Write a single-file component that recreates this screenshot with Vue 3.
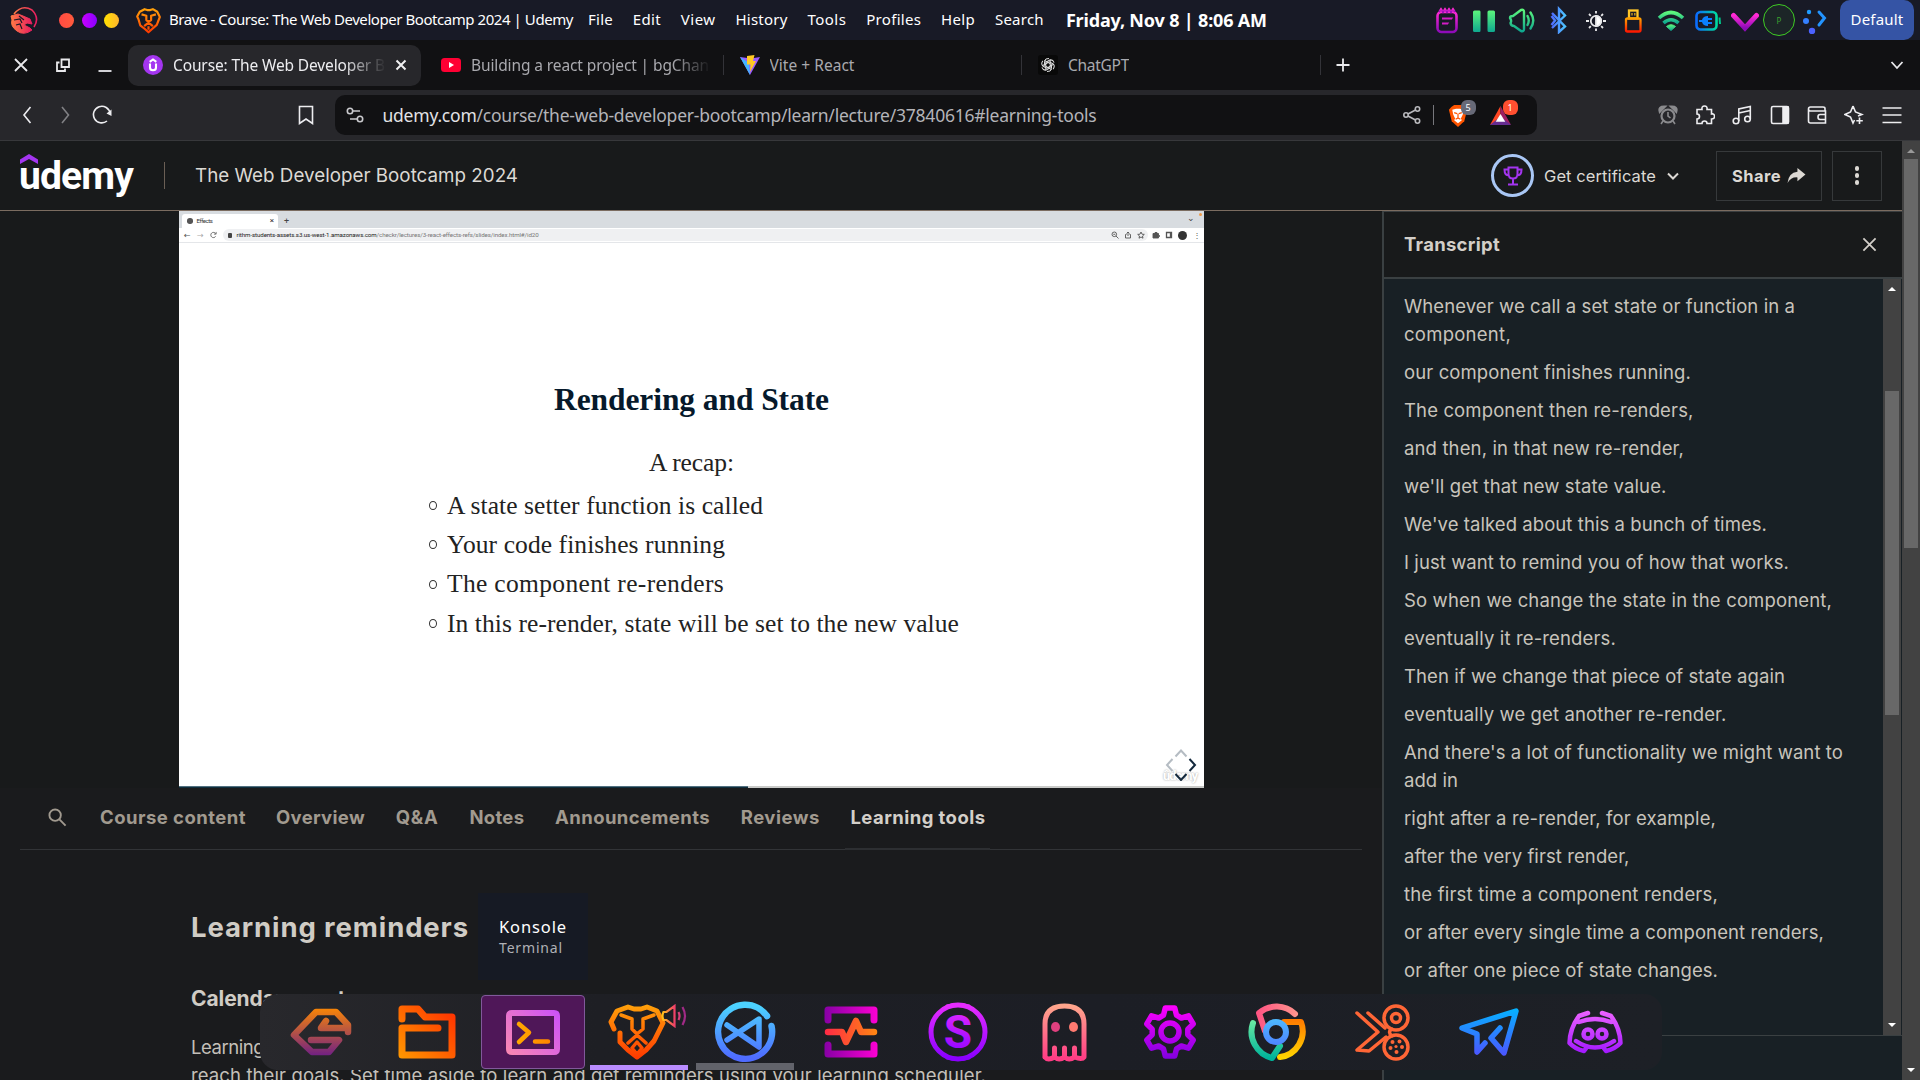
<script setup>
// Tracks a label's letters so that it takes up a given width.
const vFit = {
  mounted(el, { value }) {
    if (!value) return
    const w = el.getBoundingClientRect().width
    el.style.letterSpacing = (value - w) / el.textContent.length + 'px'
  },
}

const menus = [['File', 25], ['Edit', 28], ['View', 35], ['History', 52], ['Tools', 39], ['Profiles', 55], ['Help', 34], ['Search', 49]]

const nav = [['Course content', 146], ['Overview', 89], ['Q&A', 43], ['Notes', 55], ['Announcements', 155], ['Reviews', 79], ['Learning tools', 135]]

const slideList = [
  ['A state setter function is called', 316],
  ['Your code finishes running', 278],
  ['The component re-renders', 277],
  ['In this re-render, state will be set to the new value', 512],
]

const transcript = [
  [['Whenever we call a set state or function in a', 391], ['component,', 107]],
  [['our component finishes running.', 287]],
  [['The component then re-renders,', 289.5]],
  [['and then, in that new re-render,', 280]],
  [["we'll get that new state value.", 262.5]],
  [["We've talked about this a bunch of times.", 363]],
  [['I just want to remind you of how that works.', 385]],
  [['So when we change the state in the component,', 428]],
  [['eventually it re-renders.', 212]],
  [['Then if we change that piece of state again', 381]],
  [['eventually we get another re-render.', 322.5]],
  [["And there's a lot of functionality we might want to", 439], ['add in', 54]],
  [['right after a re-render, for example,', 312]],
  [['after the very first render,', 225.5]],
  [['the first time a component renders,', 314]],
  [['or after every single time a component renders,', 420]],
  [['or after one piece of state changes.', 314]],
]

const gradients = [
  ['g-gecko', '#ff8a00', '#6a1b8a', 'v'],
  ['g-folder', '#ff9f00', '#ff2d00', 'u'],
  ['g-term', '#ff8fa8', '#c84dff', 'u'],
  ['g-prompt', '#ffb800', '#ff7a00', 'h'],
  ['g-lion', '#ff9f0a', '#ff3a00', 'v'],
  ['g-code', '#4cd3ff', '#4f6bff', 'v'],
  ['g-mag', '#7b00a0', '#ff00d4', 'h'],
  ['g-pulse', '#ff1f4b', '#ff8a10', 'h'],
  ['g-s', '#e62cff', '#8a00ff', 'v'],
  ['g-ghost', '#ffa58c', '#ff3d85', 'v'],
  ['g-gear', '#ff00ff', '#8200e0', 'v'],
  ['g-pink', '#ff3f7f', '#ff9f8f', 'h'],
  ['g-orange', '#ff5a00', '#ffd500', 'v'],
  ['g-green', '#93ffa5', '#00b39a', 'v'],
  ['g-tele', '#00b8ff', '#5050ff', 'v'],
  ['g-disc', '#f56bff', '#9a10ff', 'v'],
].map(([id, a, b, dir]) => ({
  id, a, b,
  x1: 0, y1: dir === 'u' ? 60 : dir === 'v' ? 6 : 0,
  x2: dir === 'v' ? 0 : 60, y2: dir === 'v' ? 58 : dir === 'u' ? 6 : 0,
}))

function gearPath() {
  const pts = []
  for (let i = 0; i < 6; i++) {
    for (const [off, r] of [[-21, 18], [-11, 24.5], [11, 24.5], [21, 18]]) {
      const t = ((i * 60 - 90 + off) * Math.PI) / 180
      pts.push((32 + r * Math.cos(t)).toFixed(1) + ' ' + (32 + r * Math.sin(t)).toFixed(1))
    }
  }
  return 'M' + pts.join('L') + 'Z'
}
const ring = (x, y, r) => `M${x - r} ${y}a${r} ${r} 0 1 0 ${2 * r} 0a${r} ${r} 0 1 0 ${-2 * r} 0`

const dock = [
  { name: 'gecko', parts: [['M60 32V25L48 12H28L6 35L24 52H41L51 40H23M57 28H33L38 21', 'g-gecko', 6.5]] },
  { name: 'files', parts: [['M8 19V9H24L31 17H58V55H8V28H44', 'g-folder', 7]] },
  { name: 'konsole', parts: [['M11 13H53Q56 13 56 16V49Q56 52 53 52H11Q8 52 8 49V16Q8 13 11 13Z', 'g-term', 6], ['M18 24L28 32.500L18 42M34 41.500H47', 'g-prompt', 4.500]] },
  { name: 'brave', parts: [['M13 33V42L21 50L30 57L39 50L47 41L56 23L50 11L40 7L34 9H27L21 7L10 11L4 22L7 29', 'g-lion', 5], ['M14 15L25 19V29L30 34L36 29V19L47 15M21 43L30 35L39 43M30 42L35 48L30 54L25 48Z', 'g-lion', 3.5]] },
  { name: 'code', parts: [['M54 16A27 27 0 1 0 58.500 26', 'g-code', 6.500], ['M14 25L46 47V19L14 40', 'g-code', 5.500]] },
  { name: 'monitor', parts: [['M9 20V10H55V20M9 45V54H55V45', 'g-mag', 7], ['M9 32H23L27 42L37 21L42 32H55', 'g-pulse', 6.500]] },
  { name: 'ess', letter: 'S', parts: [[ring(32, 32, 27), 'g-s', 5], ['M21 6Q32 3 43 6M21 58Q32 61 43 58', 'g-s', 3]] },
  { name: 'ghost', eyes: true, parts: [['M13 57V24Q13 6 32.500 6Q52 6 52 24V57Q50 60 42.500 57V48M42.500 57Q37 61 32.500 57V48M32.500 57Q27 61 22.500 57V48M22.500 57Q16 61 13 57', 'g-ghost', 5]] },
  { name: 'gear', parts: [[gearPath(), 'g-gear', 5.500], [ring(32, 32, 9), 'g-gear', 5.500]] },
  { name: 'chrome', parts: [['M51 14A27 27 0 0 0 15 13L21 31', 'g-pink', 6], ['M40 22H57A26 26 0 0 1 36 57', 'g-orange', 6], ['M9 23A27 27 0 0 0 28 58L36 46', 'g-green', 6], [ring(32, 32, 10), 'g-code', 6]] },
  { name: 'snip', dots: true, parts: [['M6 13L27 32L6 50L18 51L35 37M17 13L34 28M41 36Q36 32 41 29', '', 3.500], [ring(45, 18, 12), '', 3.500], [ring(45, 18, 4.5), '', 3.500], [ring(45, 47, 12), '', 3.500]] },
  { name: 'telegram', parts: [['M28 43L20 52V34L5 28L59 11L47 53L34 38L43 28', 'g-tele', 5.500]] },
  { name: 'discord', parts: [['M25 13L16 16Q7 28 6.500 43Q12 49 21 51L24 47M39 13L48 16Q57 28 57.500 43Q52 49 43 51L40 47M16 22Q32 16 48 22M13 41Q32 54 51 41', 'g-disc', 4.500], [ring(25, 34, 4.500), 'g-disc', 4.500], [ring(39, 34, 4.500), 'g-disc', 4.500]] },
]
</script>

<template>
  <div class="screen">
    <svg class="defs" width="0" height="0">
      <defs>
        <linearGradient v-for="g in gradients" :id="g.id" :key="g.id" gradientUnits="userSpaceOnUse" :x1="g.x1" :y1="g.y1" :x2="g.x2" :y2="g.y2">
          <stop offset="0" :stop-color="g.a" /><stop offset="1" :stop-color="g.b" />
        </linearGradient>
        <linearGradient id="t-mag" x1="0" y1="0" x2="0" y2="1"><stop offset="0" stop-color="#ff2ad4" /><stop offset="1" stop-color="#8d0bb8" /></linearGradient>
        <linearGradient id="t-green" x1="0" y1="0" x2="0" y2="1"><stop offset="0" stop-color="#5cf57c" /><stop offset="1" stop-color="#0fa88f" /></linearGradient>
        <linearGradient id="t-blue" x1="0" y1="0" x2="1" y2="0"><stop offset="0" stop-color="#4f6bff" /><stop offset="1" stop-color="#4cc3ff" /></linearGradient>
        <linearGradient id="t-batt" x1="0" y1="0" x2="1" y2="0"><stop offset="0" stop-color="#0a6cff" /><stop offset="1" stop-color="#00d9a0" /></linearGradient>
        <linearGradient id="t-red" x1="0" y1="0" x2="0" y2="1"><stop offset="0" stop-color="#ffa000" /><stop offset="1" stop-color="#ff1a00" /></linearGradient>
        <linearGradient id="t-drag" x1="0" y1="0" x2="1" y2="0"><stop offset="0" stop-color="#ff7a45" /><stop offset="1" stop-color="#e81c60" /></linearGradient>
      </defs>
    </svg>

    <header class="panel">
      <svg class="dragon" viewBox="0 0 28 28" fill="none" stroke="url(#t-drag)">
        <path d="M4 8Q12 -2 22 4Q30 12 24 21" stroke-width="1.600" />
        <path d="M1 10L8 8L13 10L20 13L22 18L17 17L14 19L20 22L22 24Q14 30 7 25Q0 20 2 14Z" fill="url(#t-drag)" stroke-width="1" />
        <path d="M4 14L10 13L12 17M6 19L10 18L12 23M9 10L14 14" stroke="#181a26" stroke-width="1.200" />
      </svg>
      <i class="dot red"></i><i class="dot violet"></i><i class="dot gold"></i>
      <svg class="lion" viewBox="0 0 60 62" fill="none" stroke="url(#g-lion)" stroke-width="5" stroke-linejoin="round"><path d="M7 28L11 42L21 50L30 58L39 50L49 41L56 23L50 11L40 5L34 7H27L21 5L10 11L4 22Z" /><path d="M14 17L25 20V30L30 34L36 30V20L47 17M20 44L30 36L40 44M30 44V52" stroke-width="5" /></svg>
      <span v-fit="404" class="title">Brave - Course: The Web Developer Bootcamp 2024 | Udemy</span>
      <nav class="menus"><span v-for="m in menus" :key="m[0]" v-fit="m[1]">{{ m[0] }}</span></nav>
      <b v-fit="201" class="clock">Friday, Nov 8 | 8:06 AM</b>
      <div class="tray">
        <svg viewBox="0 0 28 28" fill="none" stroke="url(#t-mag)" stroke-width="2.600"><rect x="4.500" y="6" width="19" height="20" rx="4" /><path d="M6 6L8 3L10 6L12 3L14 6L16 3L18 6L20 3L22 6" stroke-width="2" /><path d="M9 12.500H19V12.600M9 17.500H15V17.600" stroke="#d41cc6" stroke-width="2.200" /></svg>
        <svg viewBox="0 0 28 28"><path fill="url(#t-green)" d="M3 6q0-1.500 1.500-1.500H9.500Q10.500 4.500 10.500 6V24.500Q10.500 26 9.500 26H4.500Q3 26 3 24.500ZM17.500 6q0-1.500 1.500-1.500h4.500Q25 4.500 25 6V24.500Q25 26 23.500 26H19Q17.500 26 17.500 24.500Z" /></svg>
        <svg viewBox="0 0 28 28" fill="none" stroke="url(#t-green)" stroke-width="2.400" stroke-linejoin="round" stroke-linecap="round"><path d="M2 12Q2 10 5 10L13 4Q16 3 16 6V23Q16 26 13 25L6 20Q3 20 2.500 17Q4 15 2 12ZM19.500 10Q22 14.500 19.500 19M22.500 6.500Q28 14.500 22.500 22.500" /></svg>
        <svg viewBox="0 0 28 28" fill="none" stroke="url(#t-blue)" stroke-width="2.400"><path d="M7 7L20 20.500L14 26V3L20 9.500L7 22M6.500 10L10 14.500L6.500 19" /></svg>
        <svg viewBox="0 0 28 28" fill="none" stroke="#e8e8ea" stroke-width="1.800"><circle cx="14" cy="15" r="5.200" /><path d="M14 9.800a5.200 5.200 0 0 1 0 10.400z" fill="#fff" /><path d="M14 5V7.500M14 22.500V25M4 15H7M21 15H24M7 8L8.800 9.800M19.200 20.200L21 22M21 8L19.200 9.800M7 22L8.800 20.200" /></svg>
        <svg viewBox="0 0 28 28" fill="none" stroke-width="2.300"><rect x="10" y="4.500" width="8.500" height="8" stroke="#ffc629" fill="#181a26" /><path d="M13 7V9.500M15.800 7V9.500" stroke="#c39520" stroke-width="1.500" /><rect x="7" y="12.500" width="14.500" height="13" rx="1.500" stroke="url(#t-red)" /></svg>
        <svg viewBox="0 0 28 28" fill="none" stroke="url(#t-green)" stroke-width="3.600"><path d="M2 12Q14 1 26 12M6.500 17Q14 10.500 21.500 17" /><path d="M9.500 20.500Q14 17 18.500 20.500L14 24.500Z" fill="url(#t-green)" stroke-width="1" /></svg>
        <svg viewBox="0 0 28 28" fill="none" stroke="url(#t-batt)" stroke-width="2.600"><rect x="2.500" y="6" width="20" height="17.500" rx="4" /><path d="M25.500 11.500L26 18" stroke="#00c78c" stroke-width="2" /><path fill="#0a80ff" stroke="none" d="M5 14H8Q9 10 14 10V12H18V14H14V16H18V18H14V20Q9 20 8 16H5Z" /></svg>
        <svg viewBox="0 0 28 28" fill="none" stroke="url(#t-mag)" stroke-width="5" stroke-linecap="round"><path d="M2.500 10L14 22.500L25.500 10" transform="translate(0 -.5)" /></svg>
        <span class="orb"><em>P</em></span>
        <svg viewBox="0 0 28 28" fill="#1f9bff"><circle cx="8" cy="6" r="2.200" /><circle cx="5" cy="15" r="3" fill="#3580ff" /><circle cx="11" cy="25" r="3.200" fill="#4c62ff" /><path d="M18 6L23.500 12L18 19" fill="none" stroke="#2394ff" stroke-width="3" stroke-linecap="round" /></svg>
      </div>
      <div class="desk"><span v-fit="53">Default</span></div>
    </header>

    <div class="strip">
      <div class="wc">
        <svg viewBox="0 0 14 14"><path d="M1 1L13 13M13 1L1 13" /></svg>
        <svg viewBox="0 0 14 14" class="restore"><path d="M5.500 1.500H13V9H5.500ZM3.500 4.500H1V13H9V10.500" /></svg>
        <svg viewBox="0 0 14 14"><path d="M.500 13H13.500" /></svg>
      </div>
      <div class="tab on">
        <svg viewBox="0 0 20 20"><circle cx="10" cy="10" r="10" fill="#a435f0" /><path d="M6.700 6.800L10 4.500L13.300 6.800M7 8.500V12.500Q7 15.300 10 15.300T13 12.500V8.500" fill="none" stroke="#fff" stroke-width="2.100" /></svg>
        <span class="label long"><span v-fit="212">Course: The Web Developer B</span></span>
        <svg class="x" viewBox="0 0 14 14"><path d="M2.500 2.500L11.500 11.500M11.500 2.500L2.500 11.500" /></svg>
      </div>
      <div class="tab line"><svg viewBox="0 0 20 20"><rect y="3" width="20" height="14" rx="3.500" fill="#ff0033" /><path d="M8 7L13 10L8 13Z" fill="#fff" /></svg><span class="label wide"><span v-fit="238">Building a react project | bgChan</span></span></div>
      <div class="tab line"><svg viewBox="0 0 20 20"><path d="M0 2L10 20L20 2L11 3.500Z" fill="#9a5cff" /><path d="M0 2L10 20L9 8Z" fill="#41b6ff" /><path d="M7 1L14.500 0L13 6H16L10 17L10.500 9.500H7Z" fill="#ffc922" /></svg><span class="label"><span v-fit="85">Vite + React</span></span></div>
      <div class="tab line"><svg viewBox="0 0 20 20" fill="none" stroke="#dedede" stroke-width="1"><rect width="20" height="20" rx="3" fill="#090909" stroke="none" /><g v-for="a in 6" :key="a" :transform="`rotate(${a * 60} 10 10)`"><path d="M10 7.500L13.500 9.500V13.500Q13 17 9 16.500M12.200 8.700V4.500" /></g></svg><span class="label"><span v-fit="61">ChatGPT</span></span></div>
      <svg class="plus" viewBox="0 0 14 14"><path d="M7 .500V13.500M.500 7H13.500" /></svg>
      <svg class="more" viewBox="0 0 14 14"><path d="M1.500 4L7 10L12.500 4" /></svg>
    </div>

    <div class="toolbar">
      <svg class="nv" viewBox="0 0 20 20"><path d="M13.500 2L7 10L13.500 18" /></svg>
      <svg class="nv dim" viewBox="0 0 20 20"><path d="M7 2L13.500 10L7 18" /></svg>
      <svg class="nv" viewBox="0 0 20 20"><path d="M15 16A8.300 8.300 0 1 1 18 8.500" /><path d="M14.500 8.500L19.500 4.500V11Z" fill="#ededf0" stroke="none" /></svg>
      <svg class="bm" viewBox="0 0 20 20"><path d="M3.500 1.500H16.500V18.500L10 14L3.500 18.500Z" /></svg>
      <div class="url">
        <svg class="tune" viewBox="0 0 18 18"><circle cx="4" cy="5" r="2.700" /><path d="M7 5H14M4 13H11" /><circle cx="14" cy="13" r="2.700" /></svg>
        <span v-fit="714" class="addr"><b>udemy.com</b>/course/the-web-developer-bootcamp/learn/lecture/37840616#learning-tools</span>
        <svg class="shr" viewBox="0 0 18 18"><circle cx="3" cy="9" r="2.200" /><circle cx="14.500" cy="3" r="2.200" /><circle cx="14.500" cy="15" r="2.200" /><path d="M5 8L12.500 4M5 10L12.500 14" /></svg>
        <i class="bar"></i>
        <div class="ext">
          <svg viewBox="0 0 20 24"><path d="M3 3L6 1H14L17 3L19.500 6L16.500 18L10 24L3.500 18L.500 6Z" fill="#ff5500" /><path d="M4 6L8 5H12L16 6L15 11L13 15L14 17L10 20L6 17L7 15L5 11Z" fill="#fff" /><path d="M6 9L9 10M14 9L11 10M10 10V14M7.500 16L10 14.500L12.500 16" stroke="#ff5500" stroke-width="1.300" fill="none" /></svg>
          <em>5</em>
        </div>
        <div class="ext bat">
          <svg viewBox="0 0 22 24"><path d="M11 2L0 22L11 16Z" fill="#ff4724" /><path d="M11 2L22 22L11 16Z" fill="#9e1f63" /><path d="M0 22H22L11 13Z" fill="#662d91" /><path d="M11 10.500L6 18.500H16Z" fill="#fff" /></svg>
          <em>1</em>
        </div>
      </div>
      <div class="exts">
        <svg viewBox="0 0 20 20" class="alarm"><circle cx="10" cy="11" r="6.500" stroke-width="2.200" /><path d="M10 7V11L12.500 13M5 16L3 19M15 16L17 19" /><path d="M2 6Q1 2 6 2ZM18 6Q19 2 14 2Z" stroke-width="3" /></svg>
        <svg viewBox="0 0 20 20"><path d="M2 4.500H7Q6.500 1 9.500 1T12 4.500H16.500V9Q19.500 8.500 19.500 11.300T16.500 14V18.500H12Q12 16 9.500 16T7 18.500H2V14Q4.500 14 4.500 11.500T2 9Z" /></svg>
        <svg viewBox="0 0 20 20"><circle cx="4" cy="16" r="2.800" /><circle cx="15.500" cy="14" r="2.800" /><path d="M6.800 16V4L18.300 1.500V14M6.800 8L18.300 5.500" /></svg>
        <svg viewBox="0 0 20 20"><rect x="1.500" y="1.500" width="17" height="17" rx="1.500" /><path d="M13 2H18V18H13Z" fill="#ededf0" /></svg>
        <svg viewBox="0 0 20 20"><path d="M18 6V3.500Q18 2 16 2H3.500Q1.500 2 1.500 4T3.500 6H18.500V18H3.500Q1.500 18 1.500 16V4M18.500 9.500H13Q11 9.500 11 12T13 14.500H18.500" /></svg>
        <svg viewBox="0 0 20 20"><path d="M9 1L11.500 7L18 9.500L14 11M9 1L6.500 7L1 9.500L6.500 12L9 18L10.500 15M15.500 12.500V19M12.300 15.800H18.800" /></svg>
        <svg viewBox="0 0 20 20"><path d="M.500 3H19.500M.500 10H19.500M.500 17.500H19.500" /></svg>
      </div>
    </div>

    <div class="page">
      <div class="body">
        <div class="head">
          <div class="logo"><svg viewBox="0 0 18 10"><path d="M0 5.500L9 0L18 5.500V10L9 5L0 10Z" fill="#a435f0" /></svg><span v-fit="114">udemy</span></div>
          <i class="div"></i>
          <span v-fit="323" class="course">The Web Developer Bootcamp 2024</span>
          <div class="cup"><svg viewBox="0 0 20 20"><path d="M5.500 1.500H14.500V8Q14.500 12.500 10 12.500T5.500 8ZM5.500 3.500H1.500Q1.500 9.500 6 9.500M14.500 3.500H18.500Q18.500 9.500 14 9.500M10 12.500V18.500M5 18.500H15" /></svg></div>
          <span v-fit="112" class="cert">Get certificate</span>
          <svg class="chev" viewBox="0 0 14 14"><path d="M2 4.500L7 9.500L12 4.500" /></svg>
          <div class="btn share"><b v-fit="49">Share</b><svg viewBox="0 0 20 18"><path d="M11 1L19.500 8L11 15V11Q4 10.500 .500 17Q1.500 6 11 5Z" fill="#dcd9d4" /></svg></div>
          <div class="btn dots"><i></i><i></i><i></i></div>
        </div>
        <div class="main">
          <div class="left">
            <div class="stage">
              <div class="video">
                <div class="mini-tabs">
                  <div class="mini-tab"><i class="globe"></i><span v-fit="16">Effects</span><em>×</em></div><em class="mp">+</em>
                  <em class="mc">⌄</em><i class="od"></i>
                </div>
                <div class="mini-bar">
                  <em class="ar">←</em><em class="ar lt">→</em><svg class="rl" viewBox="0 0 8 8"><path d="M6.500 5.500A3 3 0 1 1 6.500 2.500M7 .500V3H4.500" /></svg>
                  <div class="mini-url"><i class="lock"></i><span v-fit="302"><b>rithm-students-assets.s3.us-west-1.amazonaws.com</b>/checkr/lectures/3-react-effects-refs/slides/index.html#/id20</span>
                    <div class="mi"><svg viewBox="0 0 8 8"><circle cx="3.300" cy="3.300" r="2.300" /><path d="M5 5L7.500 7.500M2.300 3.300H4.300" /></svg><svg viewBox="0 0 8 8"><path d="M2.500 3.500H1.500V7H6.500V3.500H5.500M4 5V1L2.500 2.500M4 1L5.500 2.500" /></svg><svg viewBox="0 0 8 8"><path d="M4 1L5 3.200L7.300 3.400L5.500 5L6 7.200L4 6L2 7.200L2.500 5L.700 3.400L3 3.200Z" /></svg></div>
                  </div>
                  <svg viewBox="0 0 8 8"><path d="M1 2.500H3V1.500H5V2.500H6.500V4.500H7.500V5.500H6.500V7H1Z" fill="#555" /></svg>
                  <svg viewBox="0 0 8 8"><path d="M1.500 1.500H6.500V6.500H1.500ZM5.500 1.500V6.500" stroke-width="1.300" /></svg>
                  <i class="ava"></i><em class="kb">⋮</em>
                </div>
                <div class="slide">
                  <h1><span v-fit="275">Rendering and State</span></h1>
                  <p><span v-fit="85">A recap:</span></p>
                  <ul><li v-for="s in slideList" :key="s[0]"><i></i><span v-fit="s[1]">{{ s[0] }}</span></li></ul>
                </div>
                <span v-fit="34" class="wm">ûdemy</span>
                <svg class="reveal" viewBox="0 0 32 32" fill="none" stroke-width="2"><path d="M10.500 7.500L16 1.500L21.500 7.500M7.500 10L2 16L7.500 22" stroke="#b5bcc3" /><path d="M24.500 10L30 16L24.500 22M10.500 25L16 31L21.500 25" stroke="#14293d" /></svg>
                <div class="prog"><i></i></div>
              </div>
            </div>
            <div class="nav">
              <svg viewBox="0 0 20 20"><circle cx="7.500" cy="7.500" r="6" /><path d="M12 12L18.500 18.500" /></svg>
              <b v-for="(n, i) in nav" :key="n[0]" :class="{ cur: i === 6 }"><span v-fit="n[1]">{{ n[0] }}</span></b>
            </div>
            <div class="tools">
              <h2><span v-fit="278">Learning reminders</span></h2>
              <h3><span v-fit="166">Calendar events</span></h3>
              <p><span v-fit="908">Learning a little each day adds up. Research shows that students who make learning a habit are more likely to</span></p>
              <p><span v-fit="795">reach their goals. Set time aside to learn and get reminders using your learning scheduler.</span></p>
            </div>
          </div>
          <aside>
            <div class="ah"><b v-fit="96">Transcript</b><svg viewBox="0 0 16 16"><path d="M1.500 1.500L14.500 14.500M14.500 1.500L1.500 14.500" /></svg></div>
            <div class="al">
              <div class="cues"><p v-for="(c, i) in transcript" :key="i"><template v-for="l in c" :key="l[0]"><span v-fit="l[1]">{{ l[0] }}</span><br></template></p></div>
              <div class="sb"><i class="up"></i><div class="thumb"></div><i class="down"></i></div>
            </div>
            <div class="af"></div>
          </aside>
        </div>
      </div>
      <div class="psb"><i class="up"></i><div class="thumb"></div><i class="down"></i></div>
    </div>

    <div class="tip"><span v-fit="68">Konsole</span><small v-fit="64">Terminal</small></div>

    <div class="dock">
      <div v-for="d in dock" :key="d.name" class="cell" :class="d.name">
        <svg viewBox="0 0 64 64" fill="none" stroke-linejoin="round" stroke-linecap="round">
          <path v-for="(p, i) in d.parts" :key="i" :d="p[0]" :stroke="p[1] ? `url(#${p[1]})` : '#ff6636'" :stroke-width="p[2]" />
          <text v-if="d.letter" x="32" y="48" text-anchor="middle" class="ltr" fill="url(#g-s)">{{ d.letter }}</text>
          <g v-if="d.eyes"><ellipse cx="23.500" cy="27" rx="4.500" ry="5" fill="#e0407f" /><ellipse cx="41.500" cy="27" rx="4.500" ry="5" fill="#ff7a70" /></g>
          <g v-if="d.dots" fill="#ff6636"><circle cx="45" cy="46.500" r="1.600" /><circle cx="41.500" cy="42" r="2" /><circle cx="48.500" cy="41.500" r="2" /><circle cx="51" cy="47" r="2" /><circle cx="39.500" cy="48" r="2" /><circle cx="45.500" cy="52" r="2" /></g>
        </svg>
        <svg v-if="d.name === 'brave'" class="spk" viewBox="0 0 26 24" fill="none" stroke-width="2.200"><path d="M5 8L2 8Q0 12 2 16H5L13 22V2Z" stroke="url(#spk)" /><path d="M17 8Q19 12 17 16" stroke="#d8407a" /><path d="M21 3Q26 12 21 21" stroke="#a02a86" /><defs><linearGradient id="spk"><stop offset="0" stop-color="#ffc01a" /><stop offset="1" stop-color="#f0406a" /></linearGradient></defs></svg>
      </div>
    </div>
  </div>
</template>

<style>
body { background: #1a1b1d; overflow: hidden; }
</style>

<style scoped>
* { box-sizing: border-box; margin: 0; padding: 0; }
.screen { position: relative; width: 1920px; height: 1080px; overflow: hidden; display: flex; flex-direction: column; font-family: "Noto Sans", sans-serif; color: #fff; background: #1a1b1d; }
.defs { position: absolute; }
span, b, small { white-space: pre; }
svg { flex: none; display: block; }
em { font-style: normal; }

.panel { height: 40px; flex: none; background: #181a26; display: flex; align-items: center; }
.dragon { width: 28px; height: 28px; margin-left: 10px; margin-right: 21px; }
.dot { width: 15px; height: 15px; border-radius: 50%; margin-right: 7.500px; }
.red { background: linear-gradient(90deg, #ff4b43, #ff5a3c); }
.violet { background: linear-gradient(90deg, #c800ff, #8a00ff); }
.gold { background: linear-gradient(90deg, #ffe100, #ffb52e); margin-right: 16px; }
.lion { width: 27px; height: 27px; margin-right: 7px; }
.title { font-size: 15px; padding-bottom: 3px; }
.menus { display: flex; gap: 19.850px; margin-left: 15px; font-size: 15px; padding-bottom: 2px; }
.clock { font-size: 18px; margin-left: 22px; padding-bottom: 1px; }
.tray { display: flex; margin-left: 161.500px; align-items: center; }
.tray svg { width: 28px; height: 28px; margin: 0 4.650px; }
.orb { width: 32px; height: 32px; border: 1.500px solid #3ecb24; border-radius: 50%; background: #1c2527; margin: 0 1px 0 -1px; display: flex; align-items: center; justify-content: center; }
.orb em { font-size: 8px; color: #3aa030; }
.desk { width: 74px; height: 40px; border-radius: 10px; background: #3554a5; margin-left: auto; margin-right: 6px; display: flex; align-items: center; justify-content: center; font-size: 15px; padding-bottom: 2px; }

.strip { height: 50px; flex: none; background: #111113; display: flex; align-items: center; }
.wc { display: flex; width: 128px; padding-left: 14px; gap: 28px; height: 14px; }
.wc svg, .plus, .more { width: 14px; height: 14px; fill: none; stroke: #e9e9ec; stroke-width: 1.800; }
.tab { width: 298.500px; height: 41px; padding-left: 15px; display: flex; align-items: center; color: #a9a9ae; font-size: 15.500px; }
.tab > svg { width: 20px; height: 20px; margin-right: 10px; }
.tab.on { width: 293px; background: #27272b; border-radius: 10px; padding-left: 15px; color: #ededf0; margin-right: 5px; }
.tab.on .x { width: 14px; height: 14px; fill: none; stroke: #f0f0f2; stroke-width: 2; margin: 0 0 0 8px; }
.tab.line { background: linear-gradient(#333338, #333338) right 1px center / 1px 20px no-repeat; }
.label { overflow: hidden; }
.long { width: 213px; mask-image: linear-gradient(90deg, #000 80%, transparent); }
.wide { width: 240px; mask-image: linear-gradient(90deg, #000 84%, transparent); }
.plus { margin-left: 14px; }
.more { margin-left: auto; margin-right: 16px; }

.toolbar { height: 51px; flex: none; background: #27272b; border-bottom: 1px solid #37383b; display: flex; align-items: center; padding-left: 17px; }
.toolbar svg { fill: none; stroke: #ededf0; stroke-width: 1.600; }
.nv { width: 20px; height: 20px; margin-right: 17.500px; }
.nv.dim { opacity: .45; }
.bm { width: 20px; height: 20px; margin-left: 166px; margin-right: 19px; }
.url { width: 1202px; height: 40px; border-radius: 10px; background: #111113; display: flex; align-items: center; padding-left: 11px; }
.url .tune { width: 18px; height: 18px; margin-right: 19px; stroke: #c9c9cd; }
.addr { font-size: 17.500px; color: #b4b4b9; padding-bottom: 1px; }
.addr b { font-weight: 400; color: #e2e2e6; }
.url .shr { width: 18px; height: 18px; margin-left: 306px; stroke: #b9b9bd; }
.bar { width: 1px; height: 20px; background: #77777c; margin: 0 14px 0 12px; }
.ext { position: relative; width: 20px; margin-right: 21px; }
.ext svg { width: 20px; height: 23px; stroke: none; }
.bat svg { width: 23px; }
.ext em { position: absolute; left: 13px; top: -4px; width: 15px; height: 15px; border-radius: 6px; background: #676977; font-size: 9px; line-height: 15px; text-align: center; }
.bat em { background: #ff4f30; left: 14px; }
.exts { display: flex; gap: 17.400px; margin-left: 121px; }
.exts svg { width: 20px; height: 20px; }
.toolbar .alarm { stroke: #8a8a8d; }

.page { flex: 1; min-height: 0; display: flex; font-family: Inter, Roboto, sans-serif; }
.body { width: 1902px; display: flex; flex-direction: column; }
.head { height: 70px; flex: none; background: #181a1b; border-bottom: 1px solid #7b6c60; display: flex; align-items: center; padding-left: 20px; color: #dcd9d4; }
.logo { width: 114px; height: 50px; }
.logo svg { width: 18px; height: 10px; margin-top: 3px; margin-bottom: 1px; }
.logo span { display: block; width: max-content; font: 700 39px/40px Roboto, sans-serif; color: #fff; margin: -9px 0 0 -1px; }
.div { width: 1px; height: 27px; background: #6a5f55; margin: 0 30px; }
.course { font-size: 18.800px; }
.cup { width: 43px; height: 43px; border: 3px solid #a9c7f5; border-radius: 50%; margin-left: 973px; display: flex; align-items: center; justify-content: center; }
.cup svg { width: 20px; height: 20px; fill: none; stroke: #a435f0; stroke-width: 2; }
.cert { font-size: 16.500px; margin-left: 10px; }
.chev { width: 14px; height: 14px; fill: none; stroke: #dcd9d4; stroke-width: 2; margin-left: 10px; }
.btn { height: 50px; border: 1px solid #36393b; display: flex; align-items: center; }
.share { width: 106px; margin-left: 36px; padding-left: 15px; font-size: 16.500px; gap: 6px; }
.share svg { width: 19px; height: 17px; }
.dots { width: 50px; margin-left: 10px; flex-direction: column; justify-content: center; gap: 2.500px; }
.dots i { width: 4.500px; height: 4.500px; border-radius: 50%; background: #dcd9d4; }

.main { flex: 1; min-height: 0; display: flex; }
.left { width: 1382px; }
.stage { height: 577px; background: #181a1b; padding-left: 179px; }
.video { position: relative; width: 1025px; height: 577px; background: #fff; display: flex; flex-direction: column; font-family: Roboto, sans-serif; color: #444; }
.mini-tabs { height: 17px; flex: none; background: #d8dce0; display: flex; align-items: flex-end; padding-left: 3px; font-size: 6px; line-height: 14px; }
.mini-tab { width: 96px; height: 14px; border-radius: 3px 3px 0 0; background: #fff; display: flex; align-items: center; padding: 0 4px 0 5px; color: #333; }
.mini-tab em { margin-left: auto; font-size: 8px; }
.globe { width: 5.500px; height: 5.500px; border-radius: 50%; background: #555; margin-right: 4px; }
.mp { margin-left: 6px; font-size: 9px; }
.mc { margin-left: auto; font-size: 9px; line-height: 9px; align-self: flex-start; margin-top: 3px; }
.od { width: 3px; height: 3px; border-radius: 50%; background: #ef9b48; align-self: flex-start; margin: 2px 2px 0 4px; }
.mini-bar { height: 15px; flex: none; border-bottom: 1px solid #e4e6e9; display: flex; align-items: center; padding-left: 5px; font-size: 6.200px; color: #555; }
.mini-bar svg { width: 8px; height: 8px; fill: none; stroke: #555; stroke-width: .900; margin-right: 5px; }
.ar { width: 13px; font: 8px "DejaVu Sans", sans-serif; }
.lt { color: #aaa; }
.mini-bar .rl { width: 7px; margin-right: 6px; }
.mini-url { width: 925px; height: 12px; border-radius: 6px; background: #eff0f2; display: flex; align-items: center; padding: 0 0 0 5px; margin-right: 4px; }
.mini-url b { font-weight: 400; color: #222; }
.mini-url span { color: #777; }
.lock { width: 3.500px; height: 5px; background: #444; border-radius: 1px; margin-right: 5px; }
.mi { margin-left: auto; display: flex; }
.mi svg { margin-right: 5px; }
.mi svg:last-child { margin-right: 3px; }
.ava { width: 9px; height: 9px; border-radius: 50%; background: #333; margin-right: 6px; }
.kb { font-size: 8px; width: 6px; text-align: center; }
.slide { font-family: "Liberation Serif", serif; color: #222; padding-top: 138px; }
.slide h1 { font-size: 31.500px; line-height: 38px; text-align: center; color: #06192b; font-weight: 700; }
.slide p { font-size: 25.500px; line-height: 32px; text-align: center; margin-top: 28px; }
.slide ul { list-style: none; margin: 7px 0 0 250px; }
.slide li { height: 39.300px; display: flex; align-items: center; font-size: 25.500px; }
.slide li i { width: 8px; height: 9px; border: 1px solid #333; border-radius: 50%; margin-right: 10px; }
.slide li, .slide p, .slide h1 { white-space: nowrap; }
.reveal { position: absolute; right: 7px; bottom: 7px; width: 32px; height: 32px; }
.wm { position: absolute; left: 984px; bottom: 3px; font: 700 13px/18px Roboto, sans-serif; color: #fff; text-shadow: 0 0 2px #999; }
.prog { position: absolute; left: 0; right: 0; bottom: 0; height: 2px; background: #c9cac8; }
.prog i { display: block; width: 569px; height: 2px; background: #102e3c; border-top: 1px solid #527080; }

.nav { height: 62px; margin: 0 20px; border-bottom: 1px solid #323437; display: flex; align-items: center; padding-left: 28px; color: #a19a8f; font-size: 18.500px; }
.nav svg { width: 19px; height: 19px; fill: none; stroke: #a19a8f; stroke-width: 2; margin-right: 28px; margin-top: -3px; }
.nav b { height: 62px; line-height: 59px; padding: 0 5px; margin-right: 20.700px; }
.nav b:first-of-type { margin-right: 20px; }
.nav .cur { color: #d3cfc9; border-bottom: 2px solid #2d2f32; }
.tools { padding-left: 191px; color: #d0ccc5; }
.tools h2 { font-size: 27.500px; line-height: 40px; margin-top: 57px; }
.tools h3 { font-size: 21px; line-height: 30px; margin-top: 37px; }
.tools p { font-size: 18.500px; line-height: 28px; height: 28px; color: #c4c0b9; white-space: nowrap; }
.tools h3 + p { margin-top: 19px; }

aside { flex: 1; border-left: 2px solid #3a4042; display: flex; flex-direction: column; color: #c8c4bc; background: #182025; }
.ah { height: 68px; flex: none; background: #181a1b; border-top: 1px solid #3a3e40; border-bottom: 2px solid #3a4042; display: flex; align-items: center; justify-content: space-between; padding: 0 25px 1px 20px; font-size: 18.500px; color: #d3cfc9; }
.ah svg { width: 15px; height: 15px; fill: none; stroke: #d3cfc9; stroke-width: 1.900; }
.al { height: 756px; flex: none; display: flex; }
.cues { width: 499px; padding: 8px 0 0 20px; }
.cues p { font-size: 18.500px; line-height: 28px; padding: 5px 0; }
.sb, .psb { width: 18px; background: #424242; display: flex; flex-direction: column; align-items: center; }
.sb .thumb { width: 14px; height: 324px; background: #686868; margin-top: 100px; }
.up, .down { border: 4px solid transparent; width: 0; height: 0; }
.up { border-bottom-color: #fff; border-top: 0; }
.down { border-top-color: #fff; border-bottom: 0; margin-top: auto; }
.sb .up { margin-top: 8px; }
.sb .down { margin-bottom: 8px; }
.af { flex: 1; border-top: 1px solid #3a4042; }
.psb .up { margin-top: 8px; border-bottom-color: #999; }
.psb .thumb { width: 14px; height: 389px; background: #686868; margin-top: 6px; }
.psb .down { margin-bottom: 8px; }

.tip { position: absolute; left: 478px; top: 893px; width: 110px; height: 87px; background: #161a24; padding: 23px 0 0 21px; display: flex; flex-direction: column; align-items: flex-start; font-size: 16.500px; line-height: 22px; }
.tip small { font-size: 14px; line-height: 20px; color: #b0b1b6; }
.dock { position: absolute; left: 260px; top: 994px; width: 1402px; height: 76px; border-radius: 18px; background: linear-gradient(90deg, #28282c, #1e1f24 24%, #1c1e25 60%, #1d2026); display: flex; padding-left: 7px; }
.cell { position: relative; width: 106.250px; height: 76px; display: flex; align-items: center; justify-content: center; }
.cell svg { width: 64px; height: 64px; }
.konsole::before { content: ""; position: absolute; inset: 1px 1px 1px 1px; background: #4f1758; border: 1px solid #81599a; border-radius: 4px; }
.konsole svg { position: relative; }
.brave::after, .code::after { content: ""; position: absolute; left: 4px; right: 4px; bottom: 0; height: 5px; background: #b98cff; }
.code::after { height: 7px; background: #62636b; }
.brave .spk { position: absolute; left: 75px; top: 10px; width: 27px; height: 24px; }
.ltr { font: 700 46px Roboto, sans-serif; }
</style>
